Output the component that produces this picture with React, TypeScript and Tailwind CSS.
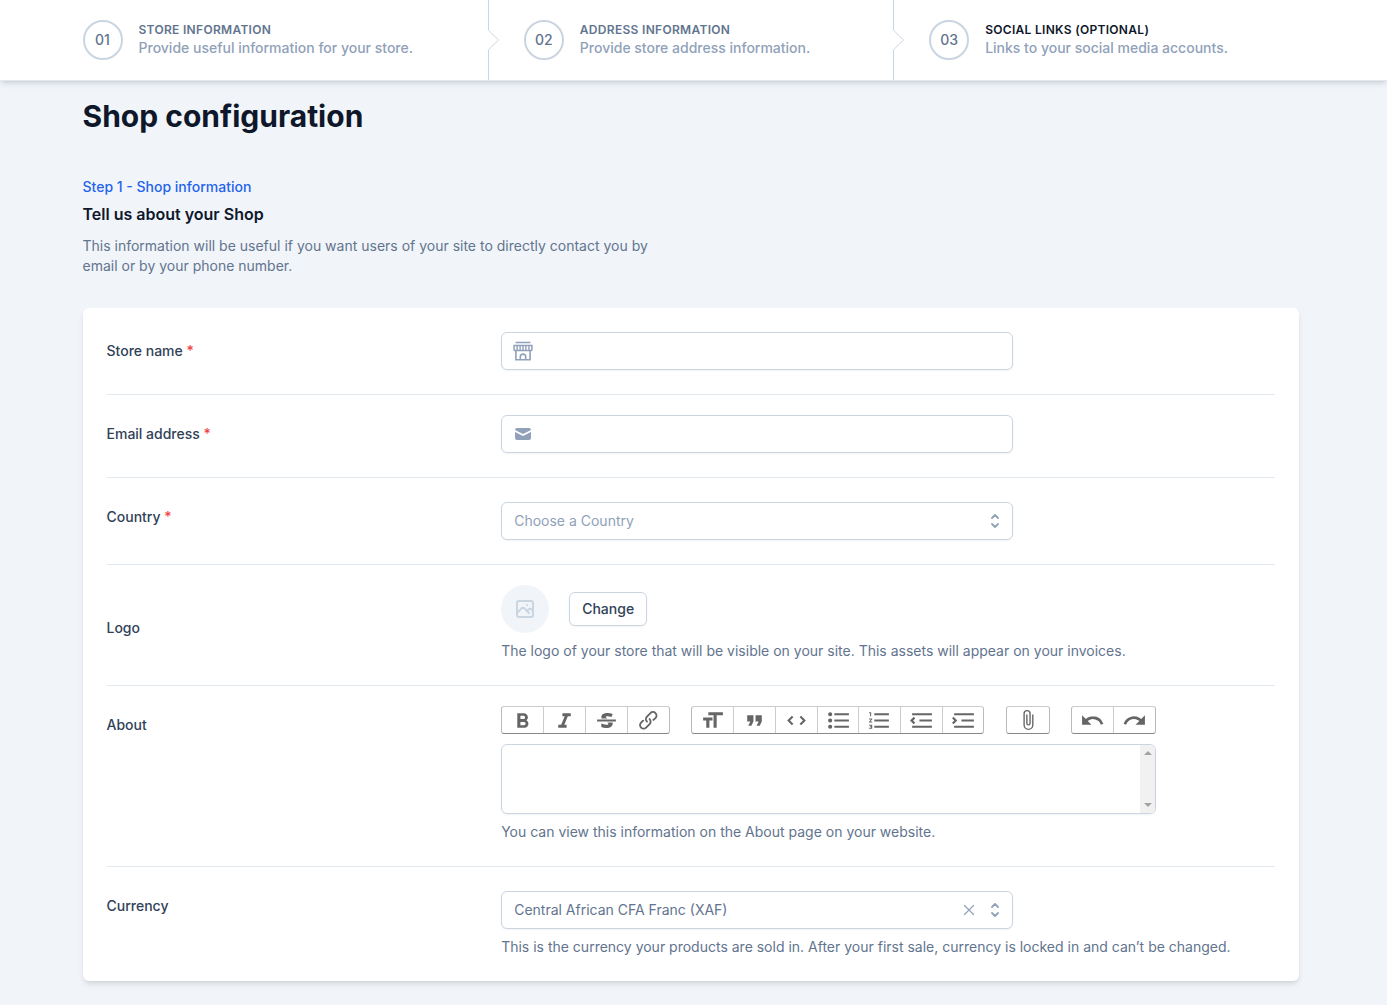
import { useState } from "react";
import type { ReactNode } from "react";

type Step = { number: string; title: string; text: string; current?: boolean };

const steps: Step[] = [
  { number: "01", title: "Store information", text: "Provide useful information for your store." },
  { number: "02", title: "Address information", text: "Provide store address information." },
  { number: "03", title: "Social links (optional)", text: "Links to your social media accounts.", current: true },
];

type Tool = { label: string; path: string; small?: boolean };

const textTools: Tool[] = [
  {
    label: "Bold",
    path: "M15.6 11.8c1-.7 1.6-1.8 1.6-2.8a4 4 0 0 0-4-4H7v14h7c2.1 0 3.7-1.7 3.7-3.8 0-1.5-.8-2.8-2.1-3.4zM10 7.5h3a1.5 1.5 0 1 1 0 3h-3v-3zm3.5 9H10v-3h3.5a1.5 1.5 0 1 1 0 3z",
  },
  { label: "Italic", path: "M10 5v3h2.2l-3.4 8H6v3h8v-3h-2.2l3.4-8H18V5h-8z" },
  {
    label: "Strikethrough",
    path: "M12.73 14l.28.14c.26.15.45.3.57.44.12.14.18.3.18.5 0 .3-.15.56-.44.75-.3.2-.76.3-1.39.3A13.52 13.52 0 0 1 7 14.95v3.37a10.64 10.64 0 0 0 4.84.88c1.26 0 2.35-.19 3.28-.56.93-.37 1.64-.9 2.14-1.57s.74-1.45.74-2.32c0-.26-.02-.51-.06-.75h-5.21zm-5.5-4c-.08-.34-.12-.7-.12-1.1 0-1.29.52-2.3 1.58-3.02 1.05-.72 2.5-1.08 4.34-1.08 1.62 0 3.28.34 4.97 1l-1.3 2.93c-1.47-.6-2.73-.9-3.8-.9-.55 0-.96.08-1.2.26-.26.17-.38.38-.38.64 0 .27.16.52.48.74.17.12.53.3 1.05.53H7.23zM3 13h18v-2H3v2z",
  },
  {
    label: "Link",
    path: "M9.88 13.7a4.3 4.3 0 0 1 0-6.07l3.37-3.37a4.26 4.26 0 0 1 6.07 0 4.3 4.3 0 0 1 0 6.06l-1.96 1.72a.91.91 0 1 1-1.3-1.3l1.97-1.71a2.46 2.46 0 0 0-3.48-3.48l-3.38 3.37a2.46 2.46 0 0 0 0 3.48.91.91 0 1 1-1.3 1.3zM4.25 19.46a4.3 4.3 0 0 1 0-6.07l1.93-1.9a.91.91 0 1 1 1.3 1.3l-1.93 1.9a2.46 2.46 0 0 0 3.48 3.48l3.37-3.38c.96-.96.96-2.52 0-3.48a.91.91 0 1 1 1.3-1.3 4.3 4.3 0 0 1 0 6.07l-3.38 3.38a4.26 4.26 0 0 1-6.07 0z",
  },
];

const blockTools: Tool[] = [
  { label: "Heading", path: "M12 9v3H9v7H6v-7H3V9h9zM8 4h14v3h-6v12h-3V7H8V4z" },
  { label: "Quote", path: "M6 17h3l2-4V7H5v6h3zm8 0h3l2-4V7h-6v6h3z" },
  {
    label: "Code",
    path: "M18.2 12L15 15.2l1.4 1.4L21 12l-4.6-4.6L15 8.8l3.2 3.2zM5.8 12L9 8.8 7.6 7.4 3 12l4.6 4.6L9 15.2 5.8 12z",
  },
  {
    label: "Bullets",
    path: "M4 4a2 2 0 1 0 0 4 2 2 0 0 0 0-4zm0 6a2 2 0 1 0 0 4 2 2 0 0 0 0-4zm0 6a2 2 0 1 0 0 4 2 2 0 0 0 0-4zm4 3h14v-2H8v2zm0-6h14v-2H8v2zm0-8v2h14V5H8z",
  },
  {
    label: "Numbers",
    path: "M2 17h2v.5H3v1h1v.5H2v1h3v-4H2v1zm1-9h1V4H2v1h1v3zm-1 3h1.8L2 13.1v.9h3v-1H3.2L5 10.9V10H2v1zm5-6v2h14V5H7zm0 14h14v-2H7v2zm0-6h14v-2H7v2z",
  },
  {
    label: "Decrease level",
    path: "M3 19h19v-2H3v2zm7-6h12v-2H10v2zm-8.3-.3l2.8 2.9L6 14.2 4 12l2-2-1.4-1.5L1 12l.7.7zM3 5v2h19V5H3z",
  },
  {
    label: "Increase level",
    path: "M3 19h19v-2H3v2zm7-6h12v-2H10v2zm-6.9-1L1 14.2l1.4 1.4L6 12l-.7-.7-2.8-2.8L1 9.9 3.1 12zM3 5v2h19V5H3z",
  },
];

const fileTools: Tool[] = [
  {
    label: "Attach files",
    small: true,
    path: "M16.5 6v11.5a4 4 0 1 1-8 0V5a2.5 2.5 0 0 1 5 0v10.5a1 1 0 1 1-2 0V6H10v9.5a2.5 2.5 0 0 0 5 0V5a4 4 0 1 0-8 0v12.5a5.5 5.5 0 0 0 11 0V6h-1.5z",
  },
];

const historyTools: Tool[] = [
  { label: "Undo", path: "M12.5 8c-2.6 0-5 1-6.9 2.6L2 7v9h9l-3.6-3.6A8 8 0 0 1 20 16l2.4-.8a10.5 10.5 0 0 0-10-7.2z" },
  { label: "Redo", path: "M18.4 10.6a10.5 10.5 0 0 0-16.9 4.6L4 16a8 8 0 0 1 12.7-3.6L13 16h9V7l-3.6 3.6z" },
];

function ToolGroup({ tools, width }: { tools: Tool[]; width: string }) {
  return (
    <div
      className={`flex h-7 divide-x divide-[#cccccc] rounded-[3px] border border-[#bbbbbb] border-t-[#cccccc] border-b-[#888888] ${width}`}
    >
      {tools.map((tool) => (
        <button key={tool.label} type="button" aria-label={tool.label} className="flex flex-1 items-center justify-center">
          <svg
            viewBox="0 0 24 24"
            className={`shrink-0 opacity-60 ${tool.small ? "h-[22px] w-[22px]" : "h-[25px] w-[25px]"}`}
            fill="black"
            aria-hidden="true"
          >
            <path d={tool.path} />
          </svg>
        </button>
      ))}
    </div>
  );
}

function StepItem({ step, first }: { step: Step; first: boolean }) {
  return (
    <li className={`relative flex items-start py-5 ${first ? "" : "pl-9"}`}>
      {!first && (
        <svg
          className="absolute top-0 left-0 h-full w-3 text-slate-300"
          viewBox="0 0 12 82"
          fill="none"
          preserveAspectRatio="none"
          aria-hidden="true"
        >
          <path d="M0.5 0V31L10.5 41L0.5 51V82" stroke="currentColor" vectorEffect="non-scaling-stroke" />
        </svg>
      )}
      <span className="flex h-10 w-10 shrink-0 items-center justify-center rounded-full border-2 border-slate-300 text-sm font-medium text-slate-500">
        {step.number}
      </span>
      <span className="mt-0.5 ml-4 flex flex-col">
        <span
          className={`text-xs font-semibold tracking-wide uppercase ${step.current ? "text-slate-900" : "text-slate-500"}`}
        >
          {step.title}
        </span>
        <span className="text-sm font-medium text-slate-400">{step.text}</span>
      </span>
    </li>
  );
}

type RowProps = {
  label: string;
  htmlFor: string;
  required?: boolean;
  first?: boolean;
  center?: boolean;
  children: ReactNode;
};

function Row({ label, htmlFor, required, first, center, children }: RowProps) {
  return (
    <div
      className={`grid grid-cols-3 gap-4 pb-6 ${center ? "items-center" : "items-start"} ${
        first ? "pt-6" : "border-t border-slate-200 pt-5"
      }`}
    >
      <label htmlFor={htmlFor} className="pt-[9px] text-sm font-medium text-slate-700">
        {label}
        {required && <span className="text-[#ef4444]"> *</span>}
      </label>
      <div className="col-span-2">{children}</div>
    </div>
  );
}

function SelectorIcon() {
  return (
    <svg viewBox="0 0 20 20" className="h-5 w-5 text-slate-400" fill="none" stroke="currentColor" aria-hidden="true">
      <path d="M7 7l3-3 3 3m0 6l-3 3-3-3" strokeWidth="1.8" strokeLinecap="round" strokeLinejoin="round" />
    </svg>
  );
}

function StoreIcon() {
  return (
    <svg viewBox="0 0 20 20" className="h-5 w-5" fill="none" stroke="currentColor" strokeWidth="1.4" aria-hidden="true">
      <path d="M3.2 1.5h13.6" strokeWidth="1.6" strokeLinecap="round" />
      <path d="M1.1 4.6h17.8v3.8a1.2 1.2 0 0 1-1.2 1.2H2.3a1.2 1.2 0 0 1-1.2-1.2z" strokeWidth="1.5" />
      <path d="M4.1 4.6v4.8M7.1 4.6v4.8M10 4.6v4.8M12.9 4.6v4.8M15.9 4.6v4.8" />
      <path d="M2.9 9.6v9.1h14.2V9.6M7.3 18.7v-2.9a2.7 2.7 0 0 1 5.4 0v2.9" strokeWidth="1.6" />
    </svg>
  );
}

const fieldClass =
  "block w-full rounded-md border border-slate-300 bg-white text-sm leading-5 shadow-xs focus:border-blue-500 focus:outline-none";

export default function App() {
  const [country, setCountry] = useState("");
  const [currency, setCurrency] = useState("XAF");

  return (
    <div className="min-h-screen bg-slate-100 font-['Inter',sans-serif] text-slate-900">
      <nav aria-label="Progress" className="border-b border-slate-200 bg-white pr-1.5 shadow-md">
        <ol className="mx-auto grid max-w-7xl grid-cols-3 px-8">
          {steps.map((step, index) => (
            <StepItem key={step.number} step={step} first={index === 0} />
          ))}
        </ol>
      </nav>

      <main className="pr-1.5">
        <div className="mx-auto max-w-7xl px-8 pt-[17px] pb-6">
          <h1 className="text-3xl font-bold">Shop configuration</h1>

          <div className="mt-[43px]">
            <p className="text-sm font-medium text-[#2563eb]">Step 1 - Shop information</p>
            <h2 className="mt-[5px] text-base font-semibold">Tell us about your Shop</h2>
            <p className="mt-2.5 max-w-xl text-sm text-slate-500">
              This information will be useful if you want users of your site to directly contact you by email or by your
              phone number.
            </p>
          </div>

          <form className="mt-8 rounded-md bg-white px-6 shadow-md" onSubmit={(event) => event.preventDefault()}>
            <Row label="Store name" htmlFor="store-name" required first>
              <div className="relative max-w-lg">
                <span className="pointer-events-none absolute inset-y-0 left-0 flex items-center pl-3 text-slate-400">
                  <StoreIcon />
                </span>
                <input id="store-name" type="text" className={`${fieldClass} py-2 pr-3 pl-10`} />
              </div>
            </Row>

            <Row label="Email address" htmlFor="email" required>
              <div className="relative max-w-lg">
                <span className="pointer-events-none absolute inset-y-0 left-0 flex items-center pl-3 text-slate-400">
                  <svg viewBox="0 0 20 20" className="h-5 w-5" fill="currentColor" aria-hidden="true">
                    <path d="M2.003 5.884L10 9.882l7.997-3.998A2 2 0 0016 4H4a2 2 0 00-1.997 1.884z" />
                    <path d="M18 8.118l-8 4-8-4V14a2 2 0 002 2h12a2 2 0 002-2V8.118z" />
                  </svg>
                </span>
                <input id="email" type="email" className={`${fieldClass} py-2 pr-3 pl-10`} />
              </div>
            </Row>

            <Row label="Country" htmlFor="country" required>
              <div className="relative mt-1 max-w-lg">
                <select
                  id="country"
                  value={country}
                  onChange={(event) => setCountry(event.target.value)}
                  className={`${fieldClass} appearance-none py-2 pr-10 pl-3 ${country ? "text-slate-500" : "text-slate-400"}`}
                >
                  <option value="">Choose a Country</option>
                  <option value="CM">Cameroon</option>
                </select>
                <span className="pointer-events-none absolute inset-y-0 right-2 flex items-center">
                  <SelectorIcon />
                </span>
              </div>
            </Row>

            <Row label="Logo" htmlFor="logo" center>
              <div className="flex items-center gap-5">
                <span className="flex h-12 w-12 items-center justify-center rounded-full bg-slate-100 text-slate-300">
                  <svg viewBox="0 0 24 24" className="h-6 w-6" fill="none" stroke="currentColor" aria-hidden="true">
                    <path
                      d="M4 16l4.586-4.586a2 2 0 012.828 0L16 16m-2-2l1.586-1.586a2 2 0 012.828 0L20 14m-6-6h.01M6 20h12a2 2 0 002-2V6a2 2 0 00-2-2H6a2 2 0 00-2 2v12a2 2 0 002 2z"
                      strokeWidth="2"
                      strokeLinecap="round"
                      strokeLinejoin="round"
                    />
                  </svg>
                </span>
                <button
                  id="logo"
                  type="button"
                  className="rounded-md border border-slate-300 bg-white px-3 py-1.5 text-sm font-medium text-slate-700 shadow-xs"
                >
                  Change
                </button>
              </div>
              <p className="mt-2 text-sm text-slate-500">
                The logo of your store that will be visible on your site. This assets will appear on your invoices.
              </p>
            </Row>

            <Row label="About" htmlFor="about">
              <div className="max-w-[655px]">
                <div className="flex justify-between">
                  <ToolGroup tools={textTools} width="w-[169px]" />
                  <ToolGroup tools={blockTools} width="w-[293px]" />
                  <ToolGroup tools={fileTools} width="w-11" />
                  <ToolGroup tools={historyTools} width="w-[85px]" />
                </div>
                <div className="mt-2.5 flex overflow-hidden rounded-md border border-slate-300 shadow-xs">
                  <textarea id="about" className="block h-[68px] min-w-0 flex-1 resize-none px-3 py-2 text-sm outline-none" />
                  <div className="flex w-[15px] flex-col items-center justify-between bg-[#f1f1f1] py-1.5" aria-hidden="true">
                    <svg viewBox="0 0 8 4" className="h-1 w-2" fill="#a3a3a3">
                      <path d="M4 0l4 4H0z" />
                    </svg>
                    <svg viewBox="0 0 8 4" className="h-1 w-2" fill="#a3a3a3">
                      <path d="M0 0h8L4 4z" />
                    </svg>
                  </div>
                </div>
              </div>
              <p className="mt-2 text-sm text-slate-500">You can view this information on the About page on your website.</p>
            </Row>

            <Row label="Currency" htmlFor="currency">
              <div className="relative mt-1 max-w-lg">
                <select
                  id="currency"
                  value={currency}
                  onChange={(event) => setCurrency(event.target.value)}
                  className={`${fieldClass} appearance-none py-2 pr-16 pl-3 text-slate-500`}
                >
                  <option value="">Choose a Currency</option>
                  <option value="XAF">Central African CFA Franc (XAF)</option>
                </select>
                <button
                  type="button"
                  aria-label="Clear currency"
                  onClick={() => setCurrency("")}
                  className="absolute inset-y-0 right-[34px] flex items-center text-slate-400"
                >
                  <svg viewBox="0 0 20 20" className="h-5 w-5" fill="none" stroke="currentColor" aria-hidden="true">
                    <path d="M5.5 5.5l9 9M14.5 5.5l-9 9" strokeWidth="1.2" strokeLinecap="round" />
                  </svg>
                </button>
                <span className="pointer-events-none absolute inset-y-0 right-2 flex items-center">
                  <SelectorIcon />
                </span>
              </div>
              <p className="mt-2 text-sm text-slate-500">
                This is the currency your products are sold in. After your first sale, currency is locked in and can’t be
                changed.
              </p>
            </Row>
          </form>
        </div>
      </main>
    </div>
  );
}
